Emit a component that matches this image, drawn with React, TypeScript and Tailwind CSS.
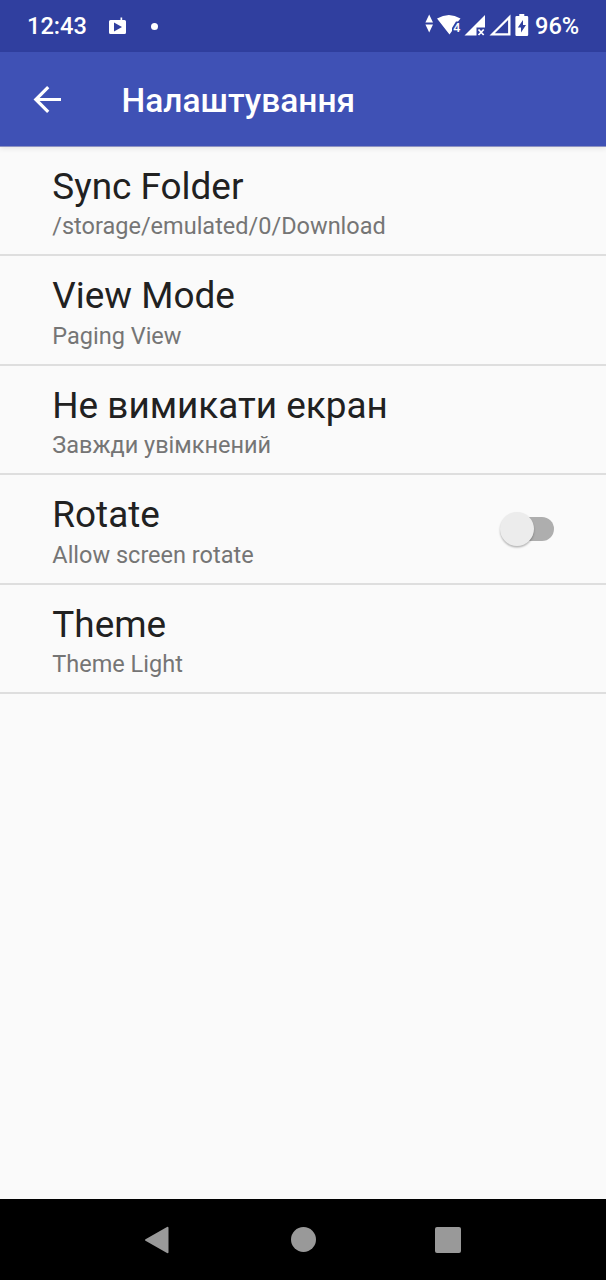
import type { ReactNode } from "react";

type Setting = { title: string; summary: string; toggle?: boolean };

const settings: Setting[] = [
  { title: "Sync Folder", summary: "/storage/emulated/0/Download" },
  { title: "View Mode", summary: "Paging View" },
  { title: "Не вимикати екран", summary: "Завжди увімкнений" },
  { title: "Rotate", summary: "Allow screen rotate", toggle: true },
  { title: "Theme", summary: "Theme Light" },
];

function StatusBar() {
  return (
    <div className="flex h-[52px] shrink-0 items-center bg-[#303f9f] pl-[27px] pr-[27px] text-white">
      <span className="w-[60px] whitespace-nowrap text-[23.600px] leading-[52px] font-medium">12:43</span>
      <svg className="ml-[21px] h-[20px] w-[20px]" viewBox="0 0 20 20">
        <path
          fill="#fff"
          fillRule="evenodd"
          d="M3 4h9.500V1.500h1.700V4H16.500a1.500 1.500 0 0 1 1.500 1.500v11a1.500 1.500 0 0 1-1.500 1.500h-14A1.500 1.500 0 0 1 1 16.500v-11A1.500 1.500 0 0 1 2.500 4zM6 6.500v9l8-4.500z"
        />
      </svg>
      <span className="ml-[23px] size-[7px] rounded-full bg-white" />
      <div className="ml-auto flex items-center">
        <svg className="h-[32px] w-[106px]" viewBox="424 10 106 32">
          <g fill="#fff">
            <path d="M429.200 14.500l3.800 8h-7.600zM429.200 32.500l-3.800-8h7.600z" />
            <path d="M437 18.500Q449 11.500 460.500 18.500L458 21.500H456L452 28V31L449.500 34.500z" />
            <path d="M464.500 35.500L485 15V27.500H476.500V35.500z" />
            <path d="M478.500 29.500l5.200 5.500M483.700 29.500l-5.200 5.500" stroke="#fff" strokeWidth="1.800" />
            <path fillRule="evenodd" d="M489.500 35.500L510.500 14.500v21zM494.800 33.200h13.300V20z" />
            <path
              fillRule="evenodd"
              d="M519.300 14h5v2h2.700q1.200 0 1.200 1.200v17.600q0 1.200-1.200 1.200h-10.400q-1.200 0-1.200-1.200V17.200q0-1.200 1.200-1.200h2.700zM523 20l-5.200 7.500h3.200v5l5-7.500h-3z"
            />
          </g>
          <text x="453.300" y="31.500" fill="#fff" fontSize="12.500" fontWeight="500">4</text>
        </svg>
        <span className="ml-[5px] w-[44px] whitespace-nowrap text-[23.600px] leading-[52px] font-medium">96%</span>
      </div>
    </div>
  );
}

function AppBar() {
  return (
    <header className="flex h-[95px] shrink-0 items-center border-b border-[#8d92c2] bg-[#3f51b5] pl-[33px] text-white shadow-[0_2px_5px_rgba(0,0,0,0.08)]">
      <svg className="h-[28px] w-[28px]" viewBox="0 0 28 28" fill="none" stroke="#fff" strokeWidth="3.200">
        <path d="M28 14.500H3M15.200 2.100L2.800 14.500l12.400 12.400" />
      </svg>
      <h1 className="ml-[60.500px] pt-[3px] text-[33.500px] leading-[44px] font-medium">Налаштування</h1>
    </header>
  );
}

function Switch() {
  return (
    <button className="relative h-[34px] w-[54px]" role="switch" aria-checked="false">
      <span className="absolute top-[5px] right-0 h-[24px] w-[44px] rounded-full bg-[#aeaeae]" />
      <span className="absolute top-0 left-0 size-[34px] rounded-full bg-[#ececec] shadow-[0_1.500px_2px_rgba(0,0,0,0.28)]" />
    </button>
  );
}

function Row({ title, summary, children }: Setting & { children?: ReactNode }) {
  return (
    <li className="flex h-[109.400px] items-start justify-between border-b-2 border-[#dedede] pr-[52px] pl-[52.300px]">
      <div className="pt-[18px]">
        <p className="text-[36.900px] leading-[44px] text-[#212121]">{title}</p>
        <p className="mt-[3.400px] text-[23.500px] leading-[28px] text-[#757575]">{summary}</p>
      </div>
      {children}
    </li>
  );
}

function NavBar() {
  return (
    <nav className="flex h-[81px] shrink-0 items-center bg-black pl-[144px]">
      <svg className="h-[28px] w-[26px]" viewBox="0 0 26 28">
        <path d="M2 14L23.500 1.800v24.400z" fill="#999" stroke="#999" strokeWidth="2" strokeLinejoin="round" />
      </svg>
      <span className="ml-[120.500px] size-[25px] rounded-full bg-[#999]" />
      <span className="ml-[119.500px] size-[26px] rounded-[2px] bg-[#999]" />
    </nav>
  );
}

export default function App() {
  return (
    <div className="flex h-[1280px] w-[606px] flex-col overflow-hidden bg-[#fafafa] font-['Roboto',sans-serif]">
      <StatusBar />
      <AppBar />
      <main className="flex-1">
        <ul>
          {settings.map((s) => (
            <Row key={s.title} {...s}>
              {s.toggle && (
                <div className="pt-[37px]">
                  <Switch />
                </div>
              )}
            </Row>
          ))}
        </ul>
      </main>
      <NavBar />
    </div>
  );
}
